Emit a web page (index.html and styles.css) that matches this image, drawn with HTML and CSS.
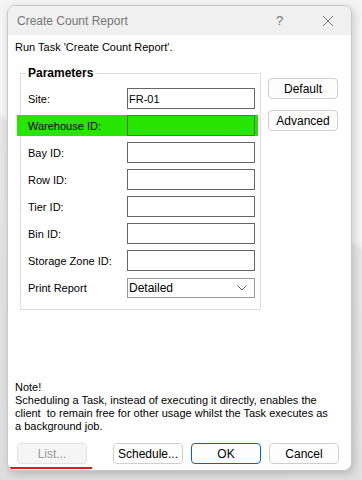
FILE: index.html
```html
<!DOCTYPE html>
<html lang="en">
<head>
    <meta charset="UTF-8">
    <meta name="viewport" content="width=device-width, initial-scale=1.0">
    <title>Create Count Report</title>
    <link rel="stylesheet" href="styles.css">
</head>
<body>
    <div class="dialog">
        <div class="titlebar">
            <span class="title">Create Count Report</span>
            <span class="help">?</span>
            <span class="close">
                <svg width="12" height="12" viewBox="0 0 12 12"><path d="M1 1 L11 11 M11 1 L1 11" stroke="#777" stroke-width="1" fill="none"/></svg>
            </span>
        </div>

        <div class="content">
            <p class="intro">Run Task 'Create Count Report'.</p>

            <div class="params">
                <fieldset class="group">
                    <legend>Parameters</legend>
                    <div class="row"><label>Site:</label><input type="text" value="FR-01"></div>
                    <div class="row highlight"><label>Warehouse ID:</label><input type="text"></div>
                    <div class="row"><label>Bay ID:</label><input type="text"></div>
                    <div class="row"><label>Row ID:</label><input type="text"></div>
                    <div class="row"><label>Tier ID:</label><input type="text"></div>
                    <div class="row"><label>Bin ID:</label><input type="text"></div>
                    <div class="row"><label>Storage Zone ID:</label><input type="text"></div>
                    <div class="row select-row">
                        <label>Print Report</label>
                        <div class="select">
                            <span>Detailed</span>
                            <svg width="10" height="6" viewBox="0 0 10 6"><path d="M0.5 0.5 L5 5 L9.5 0.5" stroke="#555" stroke-width="1" fill="none"/></svg>
                        </div>
                    </div>
                </fieldset>

                <div class="side">
                    <button class="btn">Default</button>
                    <button class="btn">Advanced</button>
                </div>
            </div>

            <div class="note">
                Note!<br>
                Scheduling a Task, instead of executing it directly, enables the<br>
                client&nbsp; to remain free for other usage whilst the Task executes as<br>
                a background job.
            </div>

            <div class="footer">
                <button class="btn disabled">List...</button>
                <button class="btn schedule">Schedule...</button>
                <button class="btn primary">OK</button>
                <button class="btn">Cancel</button>
            </div>
        </div>
        <div class="red-mark"></div>
    </div>
</body>
</html>
```

FILE: styles.css
```css
body {
    margin: 0;
    padding: 5px 0 0 7px;
    height: 480px;
    box-sizing: border-box;
    overflow: hidden;
    font-family: "Liberation Sans", Arial, sans-serif;
    font-size: 11px;
    color: #000;
    background: linear-gradient(200deg, #f4f4f4 0%, #f4f4f4 40%, #e6e6e6 41%, #dedede 100%);
}
.dialog {
    position: relative;
    width: 345px;
    height: 466px;
    box-sizing: border-box;
    background-color: #fff;
    border: 1px solid #c8c8c8;
    border-radius: 8px;
    overflow: hidden;
    box-shadow: 2px 3px 8px rgba(0, 0, 0, 0.18);
}
.titlebar {
    display: flex;
    align-items: center;
    height: 29px;
    padding-left: 9px;
    background-color: #f0f0f0;
    color: #777;
    font-size: 12px;
}
.title {
    flex: 1;
}
.help {
    width: 12px;
    margin-right: 34px;
    font-size: 13px;
}
.close {
    display: flex;
    margin-right: 17px;
}
.content {
    padding: 0 7px;
}
.intro {
    margin: 6px 0 0 0;
    line-height: 13px;
}
.params {
    display: flex;
    align-items: flex-start;
    margin-top: 12px;
}
.group {
    width: 240px;
    height: 244px;
    box-sizing: border-box;
    margin: 0 0 0 5px;
    padding: 8px 5px 0 7px;
    border: 1px solid #dcdcdc;
}
.group legend {
    padding: 0 3px 0 2px;
    margin-left: -2px;
    font-weight: bold;
    font-size: 12px;
}
.row {
    display: flex;
    align-items: center;
    height: 21px;
    margin-bottom: 6px;
}
.row label {
    width: 99px;
}
.row input {
    width: 128px;
    height: 21px;
    box-sizing: border-box;
    margin: 0;
    padding: 0 1px;
    border: 1px solid #666;
    font-family: inherit;
    font-size: 11px;
    background: transparent;
}
.highlight {
    margin-left: -11px;
    padding-left: 11px;
    margin-right: -3px;
    background-color: #26e500;
}
.select-row {
    margin-top: 7px;
    height: 20px;
}
.select {
    display: flex;
    align-items: center;
    justify-content: space-between;
    width: 128px;
    height: 20px;
    box-sizing: border-box;
    padding: 0 7px 0 1px;
    border: 1px solid #999;
    font-size: 12px;
}
.side {
    display: flex;
    flex-direction: column;
    gap: 11px;
    margin: 12px 0 0 7px;
}
.btn {
    width: 70px;
    height: 21px;
    padding: 0;
    font-family: inherit;
    font-size: 12px;
    color: #000;
    background-color: #fdfdfd;
    border: 1px solid #cfcfcf;
    border-radius: 4px;
}
.note {
    margin-top: 71px;
    line-height: 13px;
}
.footer {
    display: flex;
    gap: 8px;
    margin: 10px 0 0 2px;
}
.footer .schedule {
    margin-left: 18px;
}
.disabled {
    color: #999;
    background-color: #f5f5f5;
    border-color: #e3e3e3;
}
.primary {
    border-color: #0067c0;
}
.red-mark {
    position: absolute;
    left: 2px;
    bottom: 1px;
    width: 82px;
    height: 2px;
    background-color: #e01b1b;
}
```
